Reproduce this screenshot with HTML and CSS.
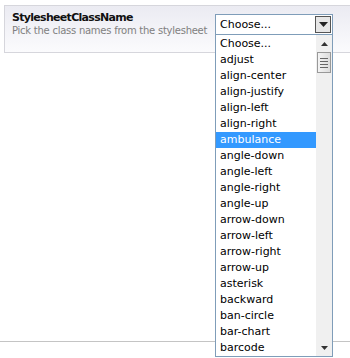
FILE: index.html
```html
<!DOCTYPE html>
<html lang="en">
<head>
  <meta charset="UTF-8" />
  <title>StylesheetClassName</title>
  <link rel="stylesheet" href="styles.css">
</head>
<body>
  <div class="page">
    <div class="field">
      <div class="field-label">
        <div class="field-title">StylesheetClassName</div>
        <div class="field-help">Pick the class names from the stylesheet</div>
      </div>
      <div class="picker">
        <div class="picker-box">
          <span class="picker-value">Choose...</span>
          <span class="picker-btn">
            <svg width="9" height="5" viewBox="0 0 9 5"><path d="M0 0h9L4.5 5z" fill="#222"/></svg>
          </span>
        </div>
        <div class="picker-list">
          <ul class="options">
            <li>Choose...</li>
            <li>adjust</li>
            <li>align-center</li>
            <li>align-justify</li>
            <li>align-left</li>
            <li>align-right</li>
            <li class="selected">ambulance</li>
            <li>angle-down</li>
            <li>angle-left</li>
            <li>angle-right</li>
            <li>angle-up</li>
            <li>arrow-down</li>
            <li>arrow-left</li>
            <li>arrow-right</li>
            <li>arrow-up</li>
            <li>asterisk</li>
            <li>backward</li>
            <li>ban-circle</li>
            <li>bar-chart</li>
            <li>barcode</li>
          </ul>
          <div class="scrollbar">
            <svg class="arrow" width="7" height="4" viewBox="0 0 7 4"><path d="M0 4h7L3.5 0z" fill="#333"/></svg>
            <div class="thumb">
              <span></span><span></span><span></span><span></span>
            </div>
            <div class="track"></div>
            <svg class="arrow" width="7" height="4" viewBox="0 0 7 4"><path d="M0 0h7L3.5 4z" fill="#333"/></svg>
          </div>
        </div>
      </div>
    </div>
    <div class="rest"></div>
  </div>
</body>
</html>
```

FILE: styles.css
```css
body {
  margin: 0;
  background: #fff;
  font-family: "DejaVu Sans", Verdana, sans-serif;
  color: #000;
}

.page {
  padding-top: 5px;
  height: 353px;
}

.field {
  display: flex;
  margin-left: 4px;
  height: 46px;
  border: 1px solid #d6d6dc;
  border-right: none;
  background: linear-gradient(#ebebf2, #fbfbfd);
}

.field-label {
  flex: 1 1 0;
  min-width: 0;
  padding: 5px 0 0 7px;
  white-space: nowrap;
}

.field-title {
  font-size: 11px;
  font-weight: bold;
  letter-spacing: -0.7px;
  line-height: 13px;
  color: #111;
}

.field-help {
  font-size: 10px;
  letter-spacing: -0.25px;
  line-height: 13px;
  color: #808080;
}

.picker {
  position: relative;
  z-index: 1;
  flex: none;
  width: 118px;
  margin: 8px 17px 0 0;
}

.picker-box {
  display: flex;
  align-items: center;
  justify-content: space-between;
  height: 19px;
  border: 1px solid #7f9db9;
  background: #fff;
  font-size: 11px;
}

.picker-value {
  padding-left: 4px;
}

.picker-btn {
  display: flex;
  align-items: center;
  justify-content: center;
  width: 14px;
  height: 15px;
  margin-right: 1px;
  border: 1px solid #555;
  background: #e6e6e6;
}

.picker-list {
  position: absolute;
  top: 20px;
  left: 0;
  width: 116px;
  display: flex;
  border: 1px solid #7f9db9;
  background: #fff;
}

.options {
  list-style: none;
  margin: 0;
  padding: 1px 0 0;
  flex: 1;
  font-size: 11px;
}

.options li {
  height: 16px;
  line-height: 16px;
  padding-left: 4px;
  white-space: nowrap;
}

.options li.selected {
  background: #3399ff;
  color: #fff;
}

.scrollbar {
  display: flex;
  flex-direction: column;
  align-items: center;
  width: 16px;
  background: #f0f0f0;
  padding: 7px 0 6px;
}

.thumb {
  display: flex;
  flex-direction: column;
  justify-content: center;
  gap: 2px;
  width: 12px;
  height: 19px;
  margin-top: 6px;
  border: 1px solid #999;
  background: linear-gradient(90deg, #f4f4f4, #dcdcdc);
}

.thumb span {
  display: block;
  width: 8px;
  height: 1px;
  margin-left: 2px;
  background: #666;
}

.track {
  flex: 1;
}

.rest {
  height: 288px;
  border-bottom: 1px solid #c4c4c4;
}
```
